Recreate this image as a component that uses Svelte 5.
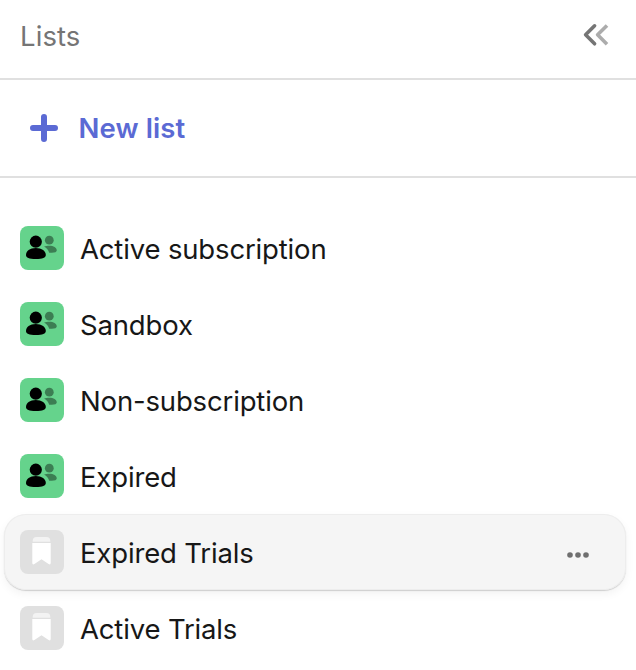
<script>
  const lists = [
    { name: 'Active subscription', kind: 'people' },
    { name: 'Sandbox', kind: 'people' },
    { name: 'Non-subscription', kind: 'people' },
    { name: 'Expired', kind: 'people' },
    { name: 'Expired Trials', kind: 'bookmark' },
    { name: 'Active Trials', kind: 'bookmark' },
  ];
  let active = $state('Expired Trials');
</script>

<aside class="panel">
  <header class="head">
    <span class="title">Lists</span>
    <button class="plain collapse" aria-label="Collapse">
      <svg width="28" height="24" viewBox="0 0 28 24" fill="none" stroke="#757575" stroke-width="3.6" stroke-linejoin="round">
        <path d="M13.6 2.8 4.6 11.8 13.6 20.8" stroke-linecap="round" />
        <path d="M26 2.4 16.6 11.8 26 21.2" opacity=".6" />
      </svg>
    </button>
  </header>

  <button class="plain new">
    <svg width="28" height="28" viewBox="0 0 28 28" stroke="#5b6ad4" stroke-width="6" stroke-linecap="round">
      <path d="M14 3V25M3 14H25" />
    </svg>
    <span class="label">New list</span>
  </button>

  <nav class="lists">
    {#each lists as list (list.name)}
      <button class="plain row" class:active={active === list.name} onclick={() => (active = list.name)}>
        <span class="tile {list.kind}">
          {#if list.kind === 'people'}
            <svg width="44" height="44" viewBox="0 0 44 44">
              <g opacity=".4">
                <circle cx="29.3" cy="14.2" r="4.4" />
                <path d="M24.1 20.4C25.5 19.9 27.4 19.7 29.3 19.7C33.5 19.7 36.8 21.6 36.8 24.3C36.8 26 34.9 26.8 31.8 26.8H29.2C28.6 24 26.7 21.8 24.1 20.4Z" />
              </g>
              <circle cx="15.8" cy="15.7" r="6.1" />
              <path d="M15.8 22C21.8 22 25.8 25 25.8 29C25.8 31.9 22.6 33 15.8 33C9 33 6 31.9 6 29C6 25 9.8 22 15.8 22Z" />
            </svg>
          {:else}
            <svg width="44" height="44" viewBox="0 0 44 44" fill="#fff">
              <path opacity=".6" d="M12.7 11.8V10.8Q12.7 7 16.5 7H26.5Q30.3 7 30.3 10.8V11.8Z" />
              <path d="M12.3 13H30.7V32.8Q30.7 35.2 28.6 34L21.5 29.2 14.4 34Q12.3 35.2 12.3 32.8Z" />
            </svg>
          {/if}
        </span>
        <span class="name">{list.name}</span>
        {#if active === list.name}
          <svg class="more" width="24" height="6" viewBox="0 0 24 6" fill="#6f6f6f">
            <circle cx="4" cy="3" r="2.8" />
            <circle cx="12" cy="3" r="2.8" />
            <circle cx="20" cy="3" r="2.8" />
          </svg>
        {/if}
      </button>
    {/each}
  </nav>
</aside>

<style>
  :global(body) {
    background: #fff;
    overflow: hidden;
  }
  .panel {
    height: 670px;
    overflow: hidden;
    font-family: Inter, 'Liberation Sans', sans-serif;
    font-size: 27.5px;
    line-height: 36px;
    letter-spacing: -0.16px;
    color: #171717;
  }
  .plain {
    border: 0;
    margin: 0;
    padding: 0;
    background: none;
    font: inherit;
    letter-spacing: inherit;
    color: inherit;
    text-align: left;
  }
  svg {
    display: block;
    flex: none;
  }
  .head {
    display: flex;
    align-items: center;
    justify-content: space-between;
    box-sizing: border-box;
    height: 80px;
    padding: 0 27px 6px 20px;
    border-bottom: 2px solid #e0e0e0;
    color: #757575;
  }
  .title {
    letter-spacing: 0.1px;
  }
  .collapse {
    padding-bottom: 3px;
  }
  .new {
    display: flex;
    align-items: center;
    gap: 20px;
    box-sizing: border-box;
    width: 100%;
    height: 98px;
    padding: 0 30px;
    border-bottom: 2px solid #e0e0e0;
    color: #5b6ad4;
    font-weight: 600;
  }
  .label {
    padding-left: 0.5px;
    letter-spacing: 0.1px;
  }
  .lists {
    display: flex;
    flex-direction: column;
    padding: 32px 10px 0 4px;
  }
  .row {
    display: flex;
    align-items: center;
    box-sizing: border-box;
    height: 76px;
    flex: none;
    padding: 0 36px 0 16px;
    border-radius: 22px;
  }
  .active {
    background: #f5f5f5;
    box-shadow: inset 0 0 0 1px #ededed, 0 1px 1px rgba(0, 0, 0, 0.16), 0 4px 10px rgba(0, 0, 0, 0.05);
  }
  .tile {
    width: 44px;
    height: 44px;
    margin-right: 16px;
    border-radius: 8px;
    flex: none;
  }
  .people {
    background: #65d38c;
  }
  .bookmark {
    background: #e0e0e0;
  }
  .name {
    flex: 1;
    padding-top: 1px;
  }
  .more {
    margin-top: 5px;
  }
</style>
